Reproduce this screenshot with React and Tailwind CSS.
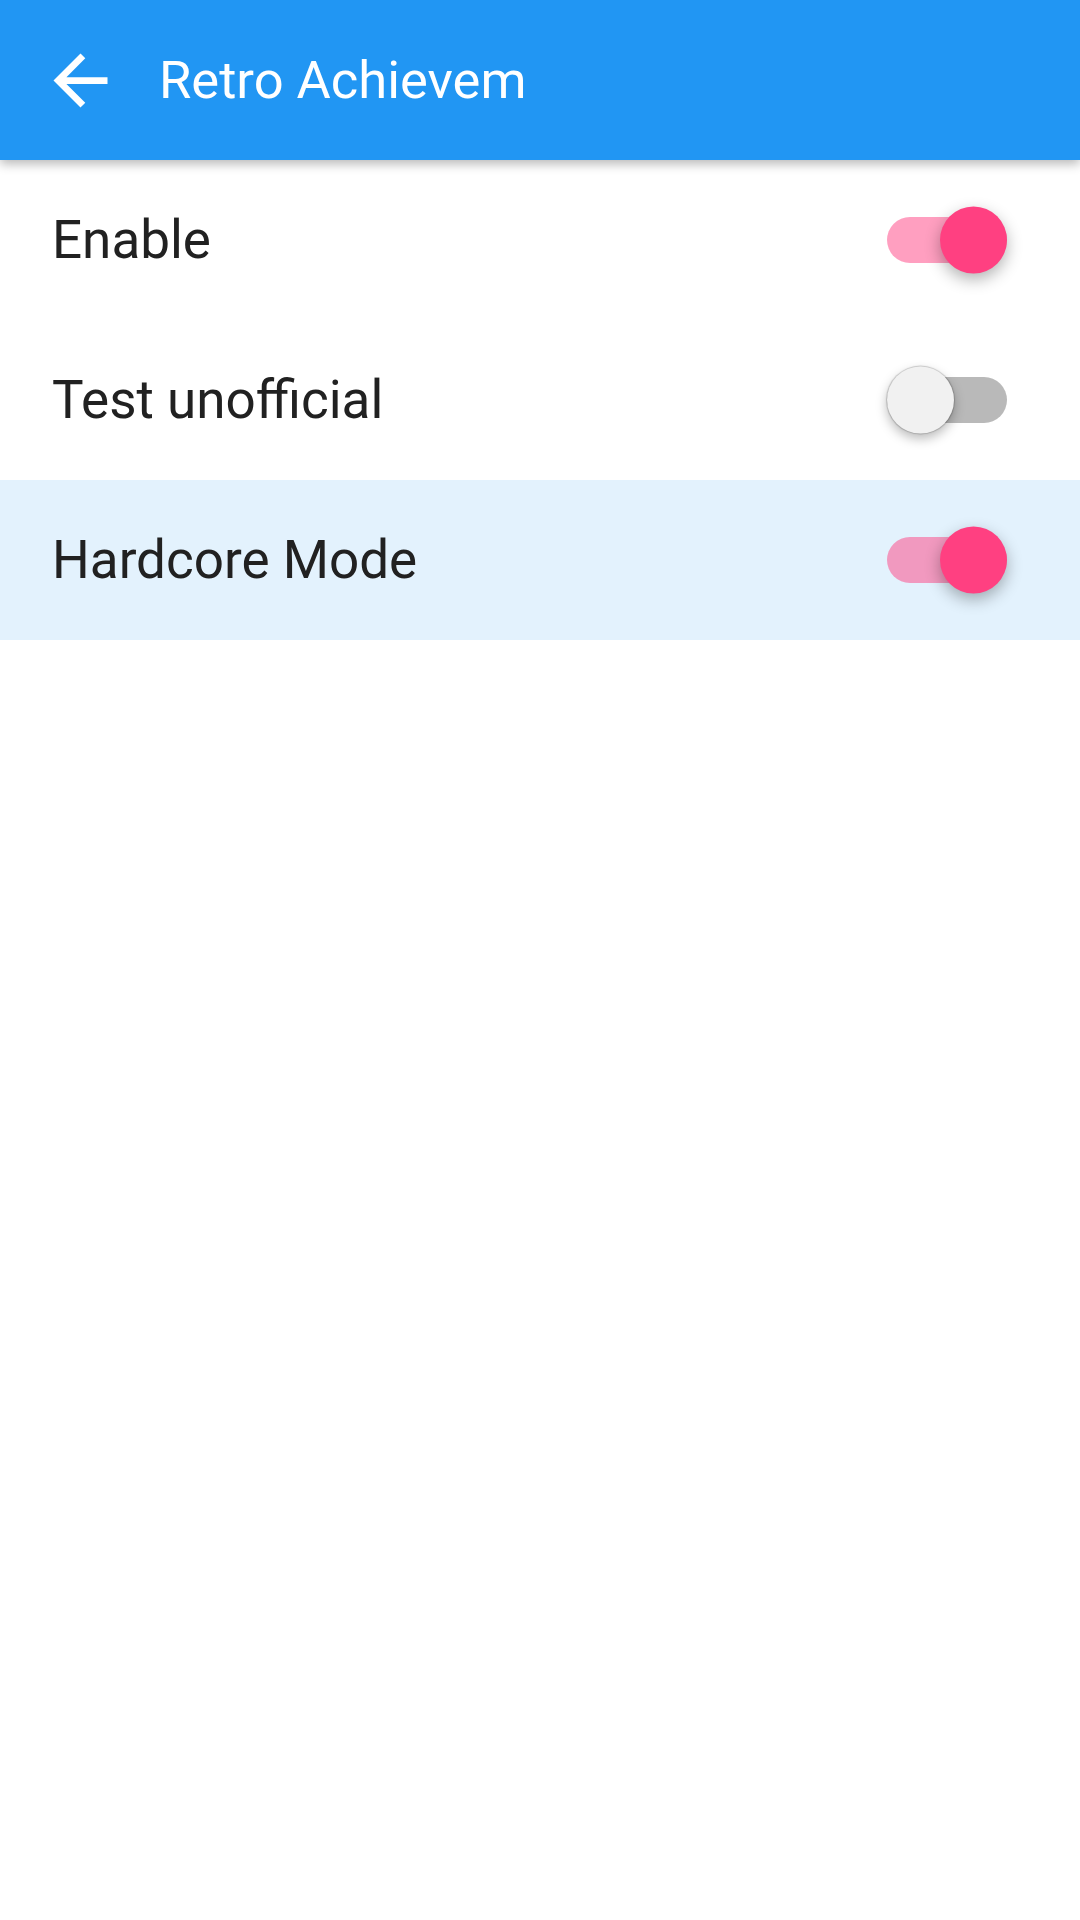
import { useState } from "react";

function Toggle({ on, onChange }) {
  return (
    <button
      type="button"
      onClick={() => onChange(!on)}
      className={
        "relative w-[120px] h-[46px] rounded-full shrink-0 " +
        (on ? "bg-[#ff4081]/50" : "bg-[#b9b9b9]")
      }
    >
      <span
        className={
          "absolute top-1/2 -translate-y-1/2 w-[67px] h-[67px] rounded-full " +
          (on
            ? "right-0 bg-[#ff4081] shadow-[0_6px_16px_rgba(0,0,0,0.3)]"
            : "left-0 bg-[#f1f1f1] shadow-[0_0_1px_1px_rgba(0,0,0,0.18),0_5px_12px_rgba(0,0,0,0.28)]")
        }
      />
    </button>
  );
}

export default function App() {
  const [settings, setSettings] = useState({
    enable: true,
    unofficial: false,
    hardcore: true,
  });

  const rows = [
    { key: "enable", label: "Enable" },
    { key: "unofficial", label: "Test unofficial" },
    { key: "hardcore", label: "Hardcore Mode", focused: true },
  ];

  return (
    <div className="min-h-[1920px] bg-white font-['Roboto',sans-serif]">
      {/* app bar */}
      <div className="relative z-10 h-[160px] bg-[#2196f3] flex items-center pl-[40px] shadow-[0_4px_10px_rgba(0,0,0,0.28)]">
        <svg width="81" height="81" viewBox="0 0 24 24" fill="white">
          <path d="M20 11H7.83l5.59-5.59L12 4l-8 8 8 8 1.41-1.41L7.83 13H20v-2z" />
        </svg>
        <span className="ml-[38px] text-[52.5px] leading-none text-white">Retro Achievem</span>
      </div>

      {rows.map((r) => (
        <div
          key={r.key}
          className={
            "h-[160px] flex items-center justify-between pl-[52px] pr-[73px] " +
            (r.focused ? "bg-[#e3f2fd]" : "")
          }
        >
          <span className="text-[53px] leading-none text-[#212121]">{r.label}</span>
          <Toggle
            on={settings[r.key]}
            onChange={(v) => setSettings((prev) => ({ ...prev, [r.key]: v }))}
          />
        </div>
      ))}
    </div>
  );
}
